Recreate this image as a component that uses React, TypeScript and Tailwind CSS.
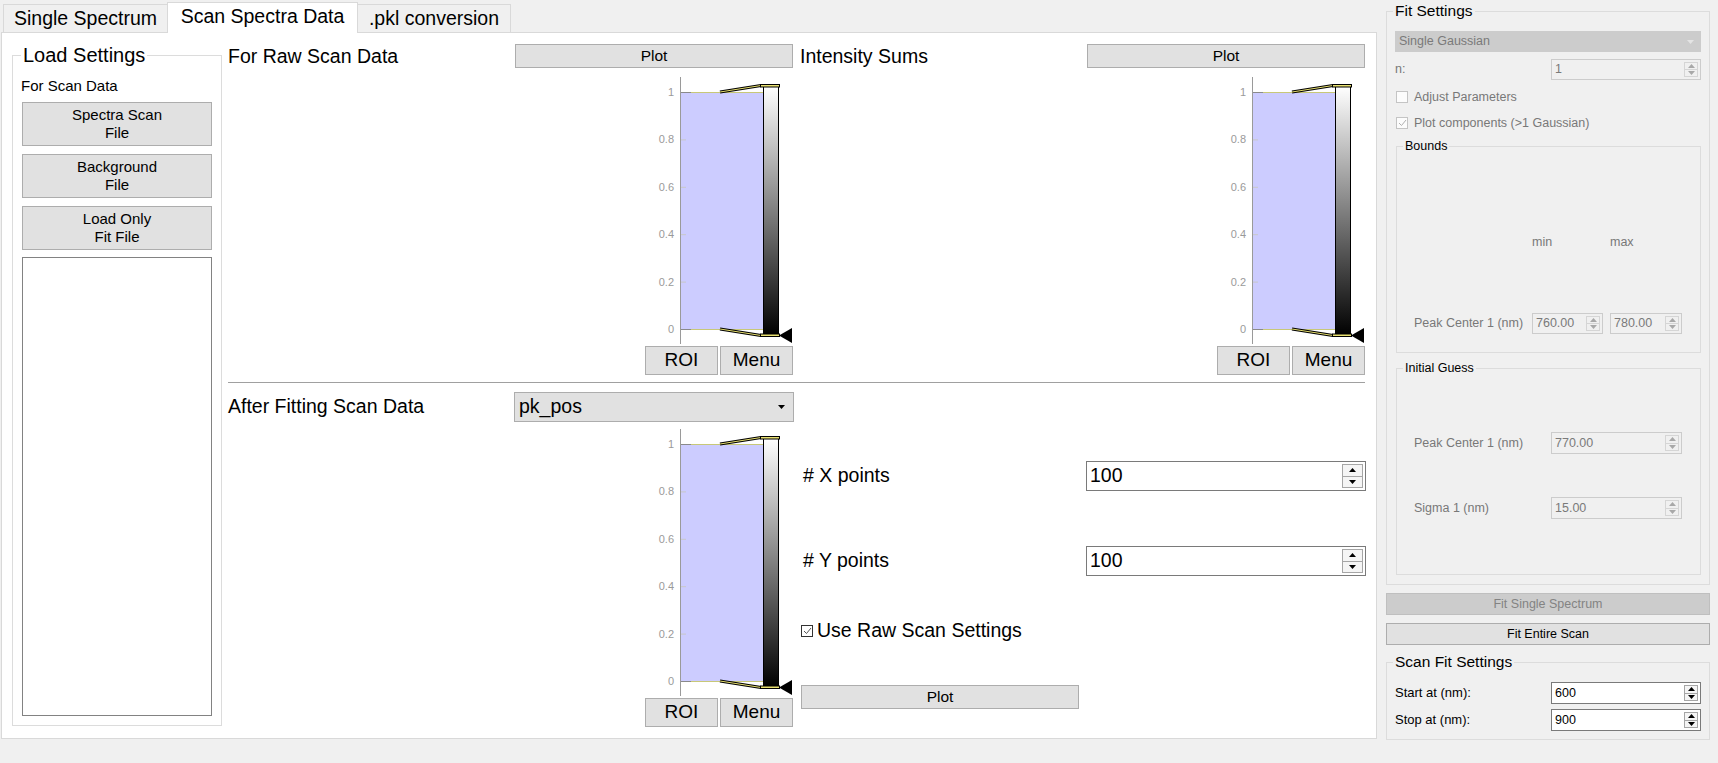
import { useId, type ReactNode } from 'react';

function Btn({ className, children }: { className?: string; children: ReactNode }) {
  return (
    <button className={`flex items-center justify-center bg-[#e1e1e1] border border-[#adadad] text-black ${className ?? ''}`}>
      {children}
    </button>
  );
}

function Arrows({ disabled, big }: { disabled?: boolean; big?: boolean }) {
  const c = disabled ? '#a8a8a8' : '#000';
  return (
    <div
      className={`flex flex-col my-[2px] mr-[2px] border ${big ? 'w-[21px]' : 'w-[14px]'} ${
        disabled ? 'border-[#d5d5d5] bg-[#f0f0f0]' : 'border-[#a6a6a6] bg-[#f5f5f5]'
      }`}
    >
      <div className={`flex-1 flex items-center justify-center border-b ${disabled ? 'border-[#d5d5d5]' : 'border-[#a6a6a6]'}`}>
        <svg width="7" height="4" viewBox="0 0 7 4">
          <path d="M0 4 L3.5 0 L7 4Z" fill={c} />
        </svg>
      </div>
      <div className="flex-1 flex items-center justify-center">
        <svg width="7" height="4" viewBox="0 0 7 4">
          <path d="M0 0 L3.5 4 L7 0Z" fill={c} />
        </svg>
      </div>
    </div>
  );
}

function Spin({
  value,
  className,
  disabled,
  big,
}: {
  value: string;
  className?: string;
  disabled?: boolean;
  big?: boolean;
}) {
  return (
    <div
      className={`flex items-stretch border ${
        disabled ? 'border-[#cccccc] bg-[#f0f0f0] text-[#7a7a7a]' : 'border-[#7a7a7a] bg-white text-black'
      } ${className ?? ''}`}
    >
      <div className={`flex-1 flex items-center ${big ? 'pl-[3px] text-[19.5px]' : 'pl-[3px] text-[12.5px]'}`}>{value}</div>
      <Arrows disabled={disabled} big={big} />
    </div>
  );
}

function CheckBox({ checked, disabled, label, className }: { checked?: boolean; disabled?: boolean; label: string; className?: string }) {
  return (
    <div className={`flex items-center gap-[6px] ${className ?? ''}`}>
      <div
        className={`w-[12px] h-[12px] border flex items-center justify-center ${
          disabled ? 'border-[#c4c4c4] bg-[#fcfcfc]' : 'border-[#333333] bg-white'
        }`}
      >
        {checked && (
          <svg width="9" height="8" viewBox="0 0 9 8">
            <path d="M1 4 L3.5 6.5 L8 1" fill="none" stroke={disabled ? '#b0b0b0' : '#555'} strokeWidth="1" />
          </svg>
        )}
      </div>
      <span className={disabled ? 'text-[#787878]' : 'text-black'}>{label}</span>
    </div>
  );
}

function Histogram() {
  const gid = useId();
  const ticks = [
    { y: 22, t: '1' },
    { y: 69.4, t: '0.8' },
    { y: 116.8, t: '0.6' },
    { y: 164.2, t: '0.4' },
    { y: 211.6, t: '0.2' },
    { y: 259, t: '0' },
  ];
  return (
    <svg width="148" height="276" viewBox="0 0 148 276" className="block">
      <defs>
        <linearGradient id={gid} x1="0" y1="0" x2="0" y2="1">
          <stop offset="0" stopColor="#ffffff" />
          <stop offset="1" stopColor="#000000" />
        </linearGradient>
      </defs>
      <rect x="35" y="22" width="83" height="237" fill="#ccccff" />
      {ticks.map((k) => (
        <g key={k.t}>
          <line x1="35" y1={k.y + 0.5} x2="41" y2={k.y + 0.5} stroke="#c8c8c8" />
          <text x="29" y={k.y + 4} textAnchor="end" fontSize="11" fill="#9a9a9a" fontFamily="Liberation Sans, Arial, sans-serif">
            {k.t}
          </text>
        </g>
      ))}
      <line x1="35" y1="22.5" x2="118" y2="22.5" stroke="#c8c878" />
      <line x1="35" y1="259.5" x2="118" y2="259.5" stroke="#c8c878" />
      <line x1="35" y1="22.5" x2="46" y2="22.5" stroke="#8a8a8a" />
      <line x1="35" y1="259.5" x2="46" y2="259.5" stroke="#8a8a8a" />
      <line x1="35.5" y1="7" x2="35.5" y2="274" stroke="#9a9a9a" />
      <rect x="118.5" y="16.5" width="15" height="249" fill={`url(#${gid})`} stroke="#000" />
      <line x1="75" y1="22" x2="116" y2="15.5" stroke="#000" strokeWidth="3" />
      <line x1="75" y1="22" x2="116" y2="15.5" stroke="#e8e070" strokeWidth="1" />
      <line x1="75" y1="259" x2="116" y2="265.5" stroke="#000" strokeWidth="3" />
      <line x1="75" y1="259" x2="116" y2="265.5" stroke="#e8e070" strokeWidth="1" />
      <rect x="115.5" y="14.5" width="19" height="2.5" fill="#e8e070" stroke="#000" />
      <rect x="115.5" y="264" width="19" height="2.5" fill="#e8e070" stroke="#000" />
      <path d="M134 265.5 L147 258 L147 273Z" fill="#000" />
    </svg>
  );
}

function HistColumn() {
  return (
    <div className="w-[148px] flex flex-col">
      <Histogram />
      <div className="flex gap-[2px] h-[29px]">
        <Btn className="w-[73px] h-[29px] text-[19px]">ROI</Btn>
        <Btn className="w-[73px] h-[29px] text-[19px]">Menu</Btn>
      </div>
    </div>
  );
}

function TopHalf({ title }: { title: string }) {
  return (
    <div className="flex flex-col">
      <div className="flex items-center justify-between h-[24px]">
        <span className="text-[19.5px] leading-[24px]">{title}</span>
        <Btn className="w-[278px] h-[24px] text-[15.5px]">Plot</Btn>
      </div>
      <div className="flex justify-end mt-[2px]">
        <HistColumn />
      </div>
    </div>
  );
}

export default function App() {
  return (
    <div className="w-[1718px] h-[763px] bg-[#f0f0f0] flex overflow-hidden text-black font-['Liberation_Sans',Arial,sans-serif]">
      {/* tab widget */}
      <div className="ml-px mt-[2px] w-[1376px] flex flex-col">
        <div className="flex items-end h-[31px] text-[19.5px]">
          <div className="ml-[2px] mb-px w-[164px] h-[28px] flex items-center justify-center bg-[#f0f0f0] border-t border-l border-[#d9d9d9]">
            Single Spectrum
          </div>
          <div className="relative z-10 w-[191px] h-[31px] flex items-center justify-center bg-white border-t border-x border-[#d9d9d9] pb-[2px]">
            Scan Spectra Data
          </div>
          <div className="mb-px w-[153px] h-[28px] flex items-center justify-center bg-[#f0f0f0] border-t border-r border-[#d9d9d9]">
            .pkl conversion
          </div>
        </div>
        <div className="-mt-px h-[707px] bg-white border border-[#d9d9d9] flex">
          {/* Load Settings */}
          <fieldset className="ml-[10px] mt-[11px] w-[210px] h-[682px] border border-[#dcdcdc]">
            <legend className="ml-[8px] px-[2px] text-[20px] leading-[22px]">Load Settings</legend>
            <div className="flex flex-col px-[9px]">
              <div className="mt-[11px] h-[18px] text-[15px] leading-[18px] -ml-px">For Scan Data</div>
              <Btn className="mt-[7px] h-[44px] flex-col text-[15px] leading-[18px]">
                <span>Spectra Scan</span>
                <span>File</span>
              </Btn>
              <Btn className="mt-[8px] h-[44px] flex-col text-[15px] leading-[18px]">
                <span>Background</span>
                <span>File</span>
              </Btn>
              <Btn className="mt-[8px] h-[44px] flex-col text-[15px] leading-[18px]">
                <span>Load Only</span>
                <span>Fit File</span>
              </Btn>
              <div className="mt-[7px] h-[459px] border border-[#828282] bg-white" />
            </div>
          </fieldset>

          {/* plots */}
          <div className="ml-[6px] w-[1137px] flex flex-col pt-[11px]">
            <div className="grid grid-cols-[565px_565px] gap-x-[7px]">
              <TopHalf title="For Raw Scan Data" />
              <TopHalf title="Intensity Sums" />
            </div>
            <div className="mt-[7px] h-px bg-[#a0a0a0]" />
            <div className="grid grid-cols-[565px_565px] gap-x-[7px]">
              <div className="flex flex-col pt-[9px]">
                <div className="flex items-center justify-between h-[30px]">
                  <span className="text-[19.5px]">After Fitting Scan Data</span>
                  <div className="w-[280px] h-[30px] -mr-px flex items-center justify-between bg-[#e1e1e1] border border-[#adadad] pl-[4px] pr-[8px] text-[19.5px]">
                    <span>pk_pos</span>
                    <svg width="7" height="4" viewBox="0 0 7 4">
                      <path d="M0 0 L3.5 4 L7 0Z" fill="#000" />
                    </svg>
                  </div>
                </div>
                <div className="flex justify-end">
                  <HistColumn />
                </div>
              </div>
              <div className="flex flex-col">
                <div className="mt-[78px] h-[30px] flex items-center justify-between -mr-px">
                  <span className="ml-[3px] text-[19.5px]"># X points</span>
                  <Spin value="100" big className="w-[280px] h-[30px]" />
                </div>
                <div className="mt-[55px] h-[30px] flex items-center justify-between -mr-px">
                  <span className="ml-[3px] text-[19.5px]"># Y points</span>
                  <Spin value="100" big className="w-[280px] h-[30px]" />
                </div>
                <CheckBox checked label="Use Raw Scan Settings" className="mt-[44px] h-[22px] ml-px text-[19.5px] !gap-[4px]" />
                <Btn className="mt-[43px] ml-px w-[278px] h-[24px] text-[15.5px]">Plot</Btn>
              </div>
            </div>
          </div>
        </div>
      </div>

      {/* right panel */}
      <div className="ml-[9px] w-[324px] mt-[2px] flex flex-col text-[12.5px]">
        <fieldset className="h-[583px] border border-[#dcdcdc]">
          <legend className="ml-[6px] px-[2px] text-[15.5px] leading-[18px]">Fit Settings</legend>
          <div className="flex flex-col px-[8px]">
            <div className="mt-[11px] h-[21px] bg-[#cccccc] border border-[#cccccc] flex items-center justify-between pl-[3px] pr-[6px] text-[#7a7a7a]">
              <span>Single Gaussian</span>
              <svg width="7" height="4" viewBox="0 0 7 4">
                <path d="M0 0 L3.5 4 L7 0Z" fill="#e4e4e4" />
              </svg>
            </div>
            <div className="mt-[7px] h-[21px] flex items-center justify-between">
              <span className="text-[#787878]">n:</span>
              <Spin value="1" disabled className="w-[150px] h-[21px]" />
            </div>
            <CheckBox disabled label="Adjust Parameters" className="mt-[8px] h-[18px] ml-px" />
            <CheckBox disabled checked label="Plot components (>1 Gaussian)" className="mt-[8px] h-[18px] ml-px" />

            <fieldset className="mt-[6px] ml-px h-[215px] border border-[#dcdcdc]">
              <legend className="ml-[6px] px-[2px] leading-[16px]">Bounds</legend>
              <div className="flex flex-col text-[#787878]">
                <div className="mt-[79px] h-[16px] flex">
                  <span className="ml-[135px] w-[78px]">min</span>
                  <span>max</span>
                </div>
                <div className="mt-[64px] h-[21px] flex items-center">
                  <span className="ml-[17px] w-[118px]">Peak Center 1 (nm)</span>
                  <Spin value="760.00" disabled className="w-[71px] h-[21px]" />
                  <Spin value="780.00" disabled className="ml-[7px] w-[72px] h-[21px]" />
                </div>
              </div>
            </fieldset>

            <fieldset className="mt-[7px] ml-px h-[215px] border border-[#dcdcdc]">
              <legend className="ml-[6px] px-[2px] leading-[16px]">Initial Guess</legend>
              <div className="flex flex-col text-[#787878]">
                <div className="mt-[56px] h-[22px] flex items-center">
                  <span className="ml-[17px] w-[137px]">Peak Center 1 (nm)</span>
                  <Spin value="770.00" disabled className="w-[131px] h-[22px]" />
                </div>
                <div className="mt-[43px] h-[22px] flex items-center">
                  <span className="ml-[17px] w-[137px]">Sigma 1 (nm)</span>
                  <Spin value="15.00" disabled className="w-[131px] h-[22px]" />
                </div>
              </div>
            </fieldset>
          </div>
        </fieldset>

        <button className="mt-[8px] h-[22px] flex items-center justify-center bg-[#cccccc] border border-[#bfbfbf] text-[#838383]">
          Fit Single Spectrum
        </button>
        <Btn className="mt-[8px] h-[22px]">Fit Entire Scan</Btn>

        <fieldset className="mt-[8px] h-[87px] border border-[#dcdcdc]">
          <legend className="ml-[6px] px-[2px] text-[15.5px] leading-[18px]">Scan Fit Settings</legend>
          <div className="flex flex-col px-[8px] text-[13px]">
            <div className="mt-[11px] h-[22px] flex items-center justify-between">
              <span>Start at (nm):</span>
              <Spin value="600" className="w-[150px] h-[22px]" />
            </div>
            <div className="mt-[5px] h-[22px] flex items-center justify-between">
              <span>Stop at (nm):</span>
              <Spin value="900" className="w-[150px] h-[22px]" />
            </div>
          </div>
        </fieldset>
      </div>
    </div>
  );
}
